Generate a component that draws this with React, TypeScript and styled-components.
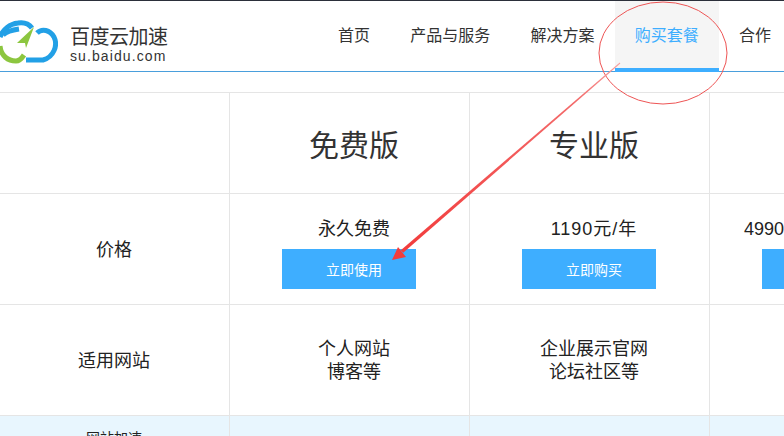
import { createGlobalStyle } from 'styled-components';
import styled from 'styled-components';

const GlobalStyle = createGlobalStyle`
  html, body {
    margin: 0;
    padding: 0;
    height: 100%;
    background: #fff;
    overflow: hidden;
  }
  #root {
    height: 100%;
  }
`;

const Page = styled.div`
  position: relative;
  width: 784px;
  height: 436px;
  overflow: hidden;
  font-family: "Liberation Sans", "Noto Sans CJK SC", sans-serif;
  color: #222;
`;

const Header = styled.header`
  height: 70px;
  box-sizing: content-box;
  display: flex;
  align-items: stretch;
  justify-content: space-between;
  border-top: 1px solid #2b2f3a;
  border-bottom: 1px solid #4a9fdc;
  margin-bottom: 20px;
`;

const Brand = styled.div`
  display: flex;
  align-items: center;
  gap: 12px;
  padding-top: 12px;
`;

const BrandText = styled.div`
  display: flex;
  flex-direction: column;
  color: #333;
  padding-top: 5px;
`;

const BrandName = styled.span`
  font-size: 20px;
  line-height: 23px;
  letter-spacing: -0.5px;
`;

const BrandUrl = styled.span`
  font-size: 14px;
  line-height: 14px;
  letter-spacing: 1.1px;
`;

const Nav = styled.nav`
  display: flex;
  align-items: stretch;
  gap: 0.25px;
  width: 466px;
  flex: none;
`;

const NavItem = styled.a<{ $active?: boolean }>`
  display: flex;
  align-items: center;
  justify-content: center;
  flex: none;
  box-sizing: border-box;
  padding: 0 20px 2px;
  margin-bottom: -1px;
  font-size: 16px;
  color: ${({ $active }) => ($active ? '#3eaeff' : '#333')};
  background: ${({ $active }) => ($active ? '#f5f5f5' : 'transparent')};
  border-bottom: 4px solid ${({ $active }) => ($active ? '#3eaeff' : 'transparent')};
  white-space: nowrap;
`;

const PriceTable = styled.div`
  display: grid;
  grid-template-columns: 230px 240px 240px 240px;
  grid-template-rows: 101px 111px 111px 60px;
  width: 950px;
  border-top: 1px solid #e5e5e5;
`;

const Cell = styled.div<{ $tint?: boolean; $plan?: boolean }>`
  display: flex;
  flex-direction: column;
  align-items: center;
  justify-content: center;
  box-sizing: border-box;
  padding: 2px 1px 0 ${({ $plan }) => ($plan ? '10px' : '0')};
  border-right: 1px solid #e5e5e5;
  border-bottom: 1px solid #e5e5e5;
  background: ${({ $tint }) => ($tint ? '#e8f6fe' : '#fff')};
  font-size: 18px;
  line-height: 23px;
  text-align: center;
  color: #222;
`;

const PriceCell = styled(Cell)`
  padding-top: 8px;
`;

const PlanTitle = styled.h2`
  margin: 0;
  font-size: 30px;
  font-weight: 400;
  color: #333;
  padding-top: 2px;
`;

const Price = styled.div<{ $shift?: number; $spread?: boolean }>`
  font-size: 18px;
  line-height: 24px;
  margin-bottom: 8px;
  margin-left: ${({ $shift }) => $shift ?? 0}px;
  letter-spacing: ${({ $spread }) => ($spread ? '1px' : 'normal')};
  white-space: nowrap;
`;

const BuyButton = styled.button`
  width: 134px;
  height: 40px;
  flex: none;
  border: none;
  padding: 0 0 0 10px;
  margin-right: 10px;
  background: #3eaeff;
  color: #fff;
  font-family: inherit;
  font-size: 14px;
`;

const TopAlign = styled(Cell)`
  justify-content: flex-start;
  padding-top: 13px;
  font-size: 14px;
  line-height: 18px;
`;

const Annotation = styled.svg`
  position: absolute;
  left: 0;
  top: 0;
  pointer-events: none;
`;

function Logo() {
  return (
    <svg width="58" height="44" viewBox="0 0 58 44" style={{ flex: 'none' }}>
      <g fill="none" strokeWidth="5" strokeLinecap="butt">
        <path d="M0 17 C3 9 10 4 18 3 C24 2 29 4 32 8" stroke="#22a0e6" />
        <path d="M3 15 C7 11 12 10 19 9" stroke="#22a0e6" />
        <path d="M37 13 C42 8 50 10 54 17 C58 25 54 37 43 40 L26 40" stroke="#22a0e6" />
        <path d="M0 26 C1 36 8 41 16 41 C20 41 22 38 24 35" stroke="#8cc63f" />
      </g>
      <path d="M34 7 L17 23 L25 23 L26 28 Z" fill="#8cc63f" />
    </svg>
  );
}

export default function App() {
  return (
    <Page>
      <GlobalStyle />
      <Header>
        <Brand>
          <Logo />
          <BrandText>
            <BrandName>百度云加速</BrandName>
            <BrandUrl>su.baidu.com</BrandUrl>
          </BrandText>
        </Brand>
        <Nav>
          <NavItem>首页</NavItem>
          <NavItem>产品与服务</NavItem>
          <NavItem>解决方案</NavItem>
          <NavItem $active>购买套餐</NavItem>
          <NavItem>合作</NavItem>
        </Nav>
      </Header>
      <PriceTable>
        <Cell />
        <Cell $plan><PlanTitle>免费版</PlanTitle></Cell>
        <Cell $plan><PlanTitle>专业版</PlanTitle></Cell>
        <Cell $plan><PlanTitle>商业版</PlanTitle></Cell>

        <Cell>价格</Cell>
        <PriceCell $plan>
          <Price>永久免费</Price>
          <BuyButton>立即使用</BuyButton>
        </PriceCell>
        <PriceCell $plan>
          <Price $spread>1190元/年</Price>
          <BuyButton>立即购买</BuyButton>
        </PriceCell>
        <PriceCell $plan>
          <Price $shift={-9}>4990元/年起（含税）</Price>
          <BuyButton>立即购买</BuyButton>
        </PriceCell>

        <Cell>适用网站</Cell>
        <Cell $plan>个人网站<br />博客等</Cell>
        <Cell $plan>企业展示官网<br />论坛社区等</Cell>
        <Cell $plan />

        <TopAlign $tint>网站加速</TopAlign>
        <Cell $tint />
        <Cell $tint />
        <Cell $tint />
      </PriceTable>
      <Annotation width="784" height="436" viewBox="0 0 784 436">
        <defs>
          <linearGradient id="arrowFade" gradientUnits="userSpaceOnUse" x1="620" y1="63" x2="402" y2="252">
            <stop offset="0" stopColor="#f7a0a0" />
            <stop offset="0.2" stopColor="#f36a6a" />
            <stop offset="1" stopColor="#f23c3c" />
          </linearGradient>
        </defs>
        <ellipse cx="663" cy="53" rx="64" ry="51" fill="none" stroke="#ee5555" strokeWidth="1" />
        <path d="M620.3 63.4 L619.7 62.6 L400.8 250.2 L403.2 252.8 Z" fill="url(#arrowFade)" />
        <path d="M392 260 L398 247 L406 257 Z" fill="#f23c3c" />
      </Annotation>
    </Page>
  );
}
